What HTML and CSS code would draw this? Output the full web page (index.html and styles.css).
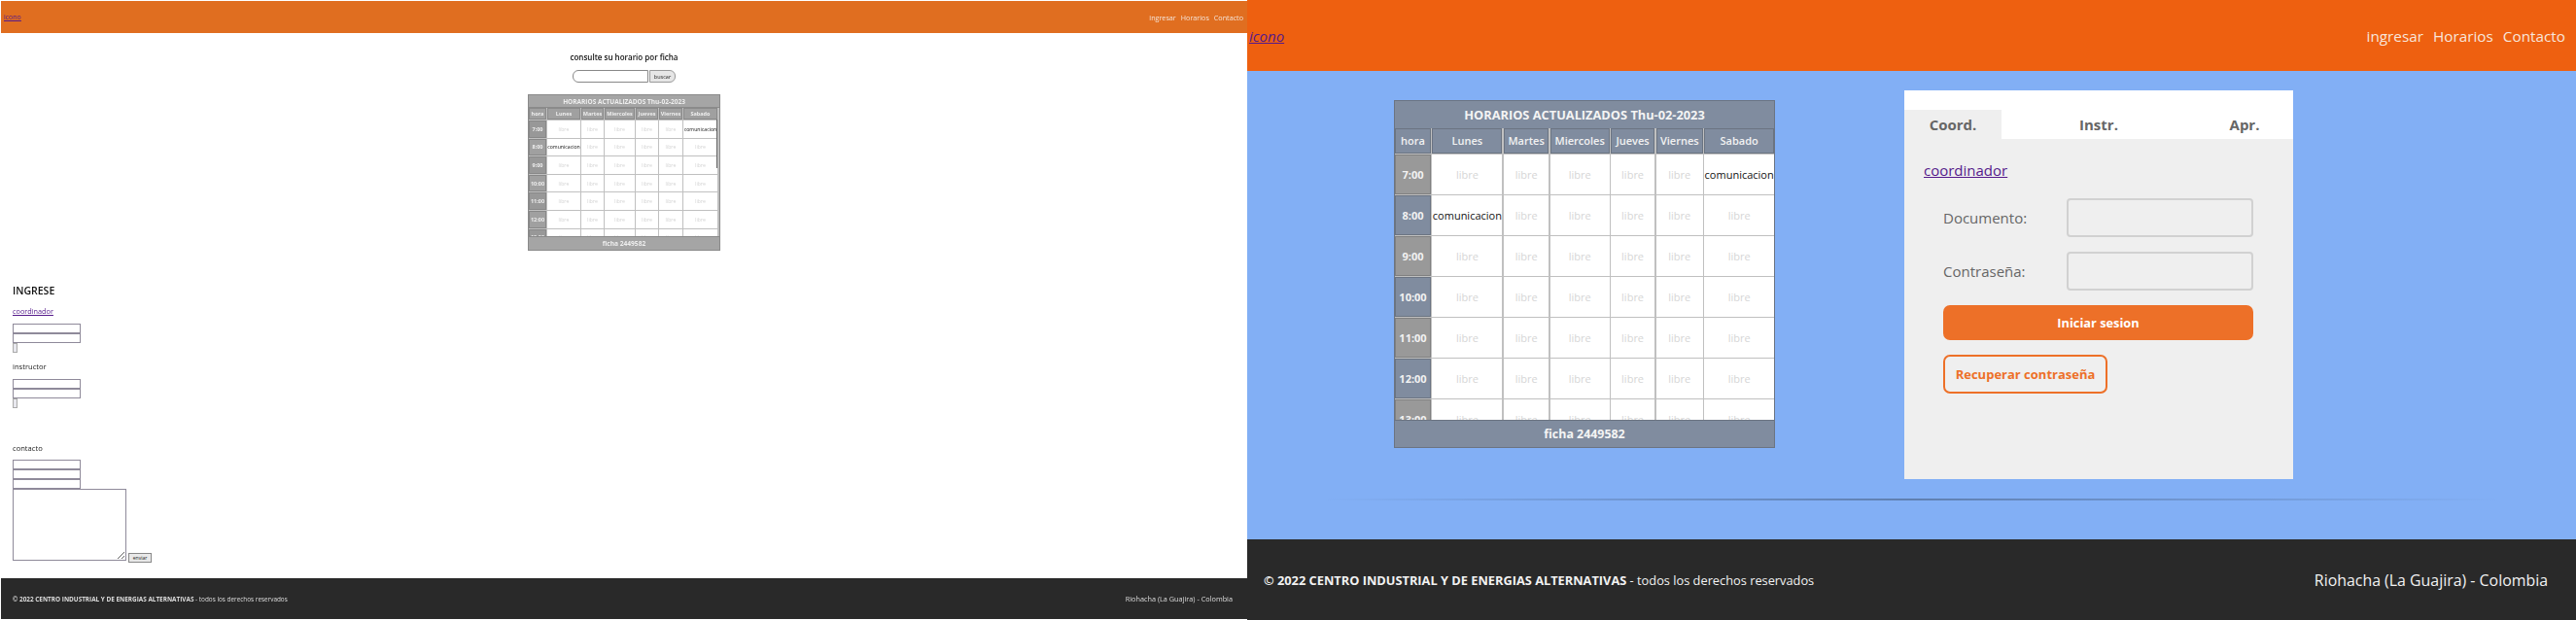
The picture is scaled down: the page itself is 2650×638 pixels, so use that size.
FILE: index.html
```html
<!DOCTYPE html>
<html lang="es">
<head>
<meta charset="utf-8">
<title>Horarios</title>
<link rel="stylesheet" href="styles.css">
</head>
<body>
<div class="stage">
  <section class="mini">
    <header class="mini-nav">
      <a class="mini-logo" href="#i">icono</a>
      <nav class="mini-links"><span>ingresar</span><span>Horarios</span><span>Contacto</span></nav>
    </header>
    <main class="mini-main">
      <div class="mini-search">
        <p class="mini-title">consulte su horario por ficha</p>
        <div class="mini-form"><input class="mini-q" type="text"><button class="mini-go">buscar</button></div>
        <div class="mini-table">
          <div class="mini-cap">HORARIOS ACTUALIZADOS Thu-02-2023</div>
          <div class="mini-scroll">
            <div class="mini-grid">
              <b class="mh">hora</b><b class="mh">Lunes</b><b class="mh">Martes</b><b class="mh">Miercoles</b><b class="mh">Jueves</b><b class="mh">Viernes</b><b class="mh">Sabado</b>
              <b class="mt g">7:00</b><i>libre</i><i>libre</i><i>libre</i><i>libre</i><i>libre</i><i class="on">comunicacion</i>
              <b class="mt">8:00</b><i class="on">comunicacion</i><i>libre</i><i>libre</i><i>libre</i><i>libre</i><i>libre</i>
              <b class="mt g">9:00</b><i>libre</i><i>libre</i><i>libre</i><i>libre</i><i>libre</i><i>libre</i>
              <b class="mt">10:00</b><i>libre</i><i>libre</i><i>libre</i><i>libre</i><i>libre</i><i>libre</i>
              <b class="mt g">11:00</b><i>libre</i><i>libre</i><i>libre</i><i>libre</i><i>libre</i><i>libre</i>
              <b class="mt">12:00</b><i>libre</i><i>libre</i><i>libre</i><i>libre</i><i>libre</i><i>libre</i>
              <b class="mt g">13:00</b><i>libre</i><i>libre</i><i>libre</i><i>libre</i><i>libre</i><i>libre</i>
            </div>
            <span class="mini-bar"></span>
          </div>
          <div class="mini-foot">ficha 2449582</div>
        </div>
      </div>
      <div class="mini-forms">
        <h2 class="mini-h">INGRESE</h2>
        <a class="mini-link" href="#c">coordinador</a>
        <div class="mini-fields"><input class="mi"><input class="mi"><button class="mb"></button></div>
        <p class="mini-sub">instructor</p>
        <div class="mini-fields"><input class="mi"><input class="mi"><button class="mb"></button></div>
        <p class="mini-sub contact">contacto</p>
        <div class="mini-fields tight"><input class="mi"><input class="mi"><input class="mi"></div>
        <div class="mini-msg"><textarea class="mt-area"></textarea><button class="mini-send">enviar</button></div>
      </div>
    </main>
    <footer class="mini-footer">
      <span class="mini-fl"><b>© 2022 CENTRO INDUSTRIAL Y DE ENERGIAS ALTERNATIVAS</b> - todos los derechos reservados</span>
      <span class="mini-fr">Riohacha (La Guajira) - Colombia</span>
    </footer>
  </section>

  <section class="full">
    <header class="nav">
      <a class="logo" href="#i">icono</a>
      <nav class="links"><span>ingresar</span><span>Horarios</span><span>Contacto</span></nav>
    </header>
    <main class="content">
      <div class="columns">
        <div class="table">
          <div class="cap">HORARIOS ACTUALIZADOS Thu-02-2023</div>
          <div class="scroll">
            <div class="grid">
              <b class="th">hora</b><b class="th">Lunes</b><b class="th">Martes</b><b class="th">Miercoles</b><b class="th">Jueves</b><b class="th">Viernes</b><b class="th">Sabado</b>
              <b class="tm g">7:00</b><i>libre</i><i>libre</i><i>libre</i><i>libre</i><i>libre</i><i class="on">comunicacion</i>
              <b class="tm">8:00</b><i class="on">comunicacion</i><i>libre</i><i>libre</i><i>libre</i><i>libre</i><i>libre</i>
              <b class="tm g">9:00</b><i>libre</i><i>libre</i><i>libre</i><i>libre</i><i>libre</i><i>libre</i>
              <b class="tm">10:00</b><i>libre</i><i>libre</i><i>libre</i><i>libre</i><i>libre</i><i>libre</i>
              <b class="tm g">11:00</b><i>libre</i><i>libre</i><i>libre</i><i>libre</i><i>libre</i><i>libre</i>
              <b class="tm">12:00</b><i>libre</i><i>libre</i><i>libre</i><i>libre</i><i>libre</i><i>libre</i>
              <b class="tm g">13:00</b><i>libre</i><i>libre</i><i>libre</i><i>libre</i><i>libre</i><i>libre</i>
            </div>
          </div>
          <div class="foot">ficha 2449582</div>
        </div>
        <div class="panel">
          <div class="tabs"><span class="tab active">Coord.</span><span class="tab wide">Instr.</span><span class="tab">Apr.</span></div>
          <div class="pane">
            <a class="plink" href="#c">coordinador</a>
            <form class="login">
              <label class="row"><span>Documento:</span><input class="field" type="text"></label>
              <label class="row"><span>Contraseña:</span><input class="field" type="password"></label>
              <button class="primary" type="button">Iniciar sesion</button>
              <button class="ghost" type="button">Recuperar contraseña</button>
            </form>
          </div>
        </div>
      </div>
      <div class="rule"></div>
    </main>
    <footer class="footer">
      <span class="fl"><b>© 2022 CENTRO INDUSTRIAL Y DE ENERGIAS ALTERNATIVAS</b> - todos los derechos reservados</span>
      <span class="fr">Riohacha (La Guajira) - Colombia</span>
    </footer>
  </section>
</div>
</body>
</html>
```
FILE: styles.css
```css
* { box-sizing: border-box; }
html, body { margin: 0; padding: 0; height: 100%; overflow: hidden; background: #fff; }
body { font-family: "Open Sans", "Noto Sans", sans-serif; }
.stage { display: flex; width: 2650px; height: 638px; }

/* small left page */
.mini { width: 1283px; height: 636px; margin-top: 1px; padding-left: 1px; display: flex; flex-direction: column; background: #fff; flex: none; }
.mini-nav { height: 33px; background: #e06e20; display: flex; align-items: center; justify-content: space-between; padding: 0 4px 0 3px; flex: none; }
.mini-logo { font-size: 7px; color: #551a8b; filter: blur(.25px); }
.mini-links { display: flex; gap: 5px; font-size: 7.2px; color: #f4e4d8; filter: blur(.25px); }
.mini-main { flex: 1; display: flex; flex-direction: column; min-height: 0; filter: blur(.25px); }
.mini-search { display: flex; flex-direction: column; align-items: center; padding-top: 19px; height: 228px; flex: none; }
.mini-title { margin: 0; font-size: 8px; font-weight: 600; line-height: 12px; color: #111; }
.mini-form { display: flex; gap: 1px; margin-top: 7px; height: 13px; }
.mini-q { width: 78px; height: 13px; border: 1px solid #888; border-radius: 6px 0 0 6px; background: #fff; padding: 0; }
.mini-go { width: 27px; height: 13px; border: 1px solid #999; border-radius: 0 6px 6px 0; background: #e6e6e6; padding: 0; font: 5.5px "Open Sans", sans-serif; color: #222; }
.mini-table { width: 198px; height: 161px; margin-top: 12px; border: 1px solid #8a8a8a; background: #a5a5a5; display: flex; flex-direction: column; flex: none; }
.mini-cap { height: 13px; flex: none; color: #eee; font-size: 6.5px; font-weight: 700; text-align: center; line-height: 13px; border-bottom: 1px solid #8a8a8a; }
.mini-scroll { position: relative; height: 132px; overflow: hidden; flex: none; background: #c0c0c0; }
.mini-grid { display: grid; grid-template-columns: 18px 34px 23px 31px 23px 24px 35px; column-gap: 1px; row-gap: 1px; grid-template-rows: 12px; grid-auto-rows: 17.6px; }
.mini-grid b { display: flex; align-items: center; justify-content: center; font-size: 5.5px; color: #eee; background: #a0a0a0; }
.mini-grid .mh { border: 1px solid #8a8a8a; }
.mini-grid .mt { border: 1px solid #888; }
.mini-grid .mt.g { background: #989898; }
.mini-grid i { display: flex; align-items: center; justify-content: center; background: #fff; font-style: normal; font-size: 5.2px; color: #d4d4d4; }
.mini-grid i.on { color: #111; white-space: nowrap; }
.mini-bar { position: absolute; right: 2px; top: 12px; width: 1px; height: 50px; background: #666; }
.mini-foot { height: 14px; flex: none; color: #eee; font-size: 6.6px; font-weight: 700; text-align: center; line-height: 14px; border-top: 1px solid #8a8a8a; }
.mini-forms { flex: 1; padding: 30px 0 0 12px; }
.mini-h { margin: 0; font-size: 10.5px; font-weight: 600; line-height: 14px; color: #111; }
.mini-link { display: block; margin-top: 9px; font-size: 7.3px; line-height: 10px; color: #551a8b; }
.mini-fields { display: flex; flex-direction: column; align-items: flex-start; margin-top: 8px; }
.mini-fields.tight { margin-top: 7px; }
.mi { display: block; width: 70px; height: 10px; border: 1px solid #8f8a9a; background: #fff; padding: 0; }
.mb { display: block; width: 5px; height: 10px; border: 1px solid #aaa; background: #e8e8ee; padding: 0; }
.mini-sub { margin: 9px 0 0; font-size: 7.6px; line-height: 10px; color: #222; }
.mini-sub.contact { margin-top: 36px; }
.mini-msg { display: flex; align-items: flex-end; gap: 2px; }
.mt-area { display: block; width: 117px; height: 74px; border: 1px solid #8f8a9a; background: #fff; padding: 0; margin: 0; }
.mini-send { width: 24px; height: 10px; margin-bottom: -2px; border: 1px solid #888; background: #e8e8e8; padding: 0; font: 5px "Open Sans", sans-serif; color: #222; }
.mini-footer { height: 42px; flex: none; background: #292929; display: flex; align-items: center; justify-content: space-between; padding: 0 15px 0 12px; color: #ddd; }
.mini-fl { font-size: 6.4px; filter: blur(.2px); }
.mini-fr { font-size: 7.3px; filter: blur(.2px); }

/* right page */
.full { width: 1367px; flex: none; height: 638px; display: flex; flex-direction: column; background: #82aff5; }
.nav { height: 73px; flex: none; background: #ee6010; display: flex; align-items: center; justify-content: space-between; padding: 0 11px 0 2px; }
.logo { font-size: 15px; font-style: italic; color: #551a8b; }
.links { display: flex; gap: 10px; font-size: 15.3px; color: #f8e6dc; }
.content { flex: 1; min-height: 0; display: flex; flex-direction: column; }
.columns { display: flex; align-items: flex-start; height: 440px; flex: none; padding: 20px 0 0 151px; }
.table { width: 392px; height: 358px; margin-top: 10px; flex: none; border: 1px solid #6b7482; background: #808c9f; display: flex; flex-direction: column; }
.cap { height: 28px; flex: none; line-height: 28px; text-align: center; font-size: 12.8px; font-weight: 700; color: #f4f4f4; }
.scroll { height: 300px; flex: none; overflow: hidden; background: #c0c0c0; }
.grid { display: grid; grid-template-columns: 37px 72px 46.7px 60.7px 45.3px 48.3px 71.7px; column-gap: 1.4px; row-gap: 1.33px; grid-template-rows: 25.67px; grid-auto-rows: 40.67px; }
.grid b { display: flex; align-items: center; justify-content: center; font-size: 11px; font-weight: 700; color: #f2f2f2; background: #808c9f; border: 1px solid #6b7482; }
.grid .th { font-weight: 600; }
.grid .tm.g { background: #999; border-color: #808080; }
.grid i { display: flex; align-items: center; justify-content: center; background: #fff; font-style: normal; font-size: 11px; color: #d6d6d6; }
.grid i.on { color: #111; white-space: nowrap; }
.foot { height: 28px; flex: none; border-top: 1px solid #6b7482; line-height: 27px; text-align: center; font-size: 12.4px; font-weight: 700; color: #f4f4f4; }
.panel { width: 400px; height: 400px; flex: none; margin-left: 133px; background: #fff; padding-top: 20px; display: flex; flex-direction: column; }
.tabs { display: flex; height: 30px; flex: none; }
.tab { width: 100px; text-align: center; font-size: 15px; font-weight: 700; color: #666; line-height: 30px; }
.tab.wide { width: 200px; }
.tab.active { background: #efefef; }
.pane { flex: 1; background: #efefef; padding: 20px 20px 0; }
.plink { display: block; font-size: 15px; line-height: 24px; color: #551a8b; }
.login { padding: 0 20px; margin-top: 17px; display: flex; flex-direction: column; align-items: flex-start; }
.row { display: flex; align-items: center; justify-content: space-between; width: 319px; height: 40px; margin-bottom: 15px; font-size: 15px; color: #666; }
.field { width: 192px; height: 40px; border: 2px solid #d1d1d1; border-radius: 4px; background: #efefef; padding: 0; }
.primary { width: 319px; height: 36px; border: 0; border-radius: 7px; background: #ed7028; color: #fff; font: 700 12.8px "Open Sans", sans-serif; }
.ghost { width: 169px; height: 40px; margin-top: 15px; border: 2px solid #ed7028; border-radius: 7px; background: #efefef; color: #ed7028; font: 700 13px "Open Sans", sans-serif; padding: 0; white-space: nowrap; }
.rule { height: 2px; margin: 0 80px; flex: none; background: linear-gradient(90deg, rgba(96,128,176,0), #5f7fb0 50%, rgba(96,128,176,0)); }
.footer { height: 83px; flex: none; margin-top: auto; background: #292929; display: flex; align-items: center; justify-content: space-between; padding: 0 29px 0 17px; color: #f2f2f2; }
.fl { font-size: 12.8px; }
.fr { font-size: 15.9px; }
```
